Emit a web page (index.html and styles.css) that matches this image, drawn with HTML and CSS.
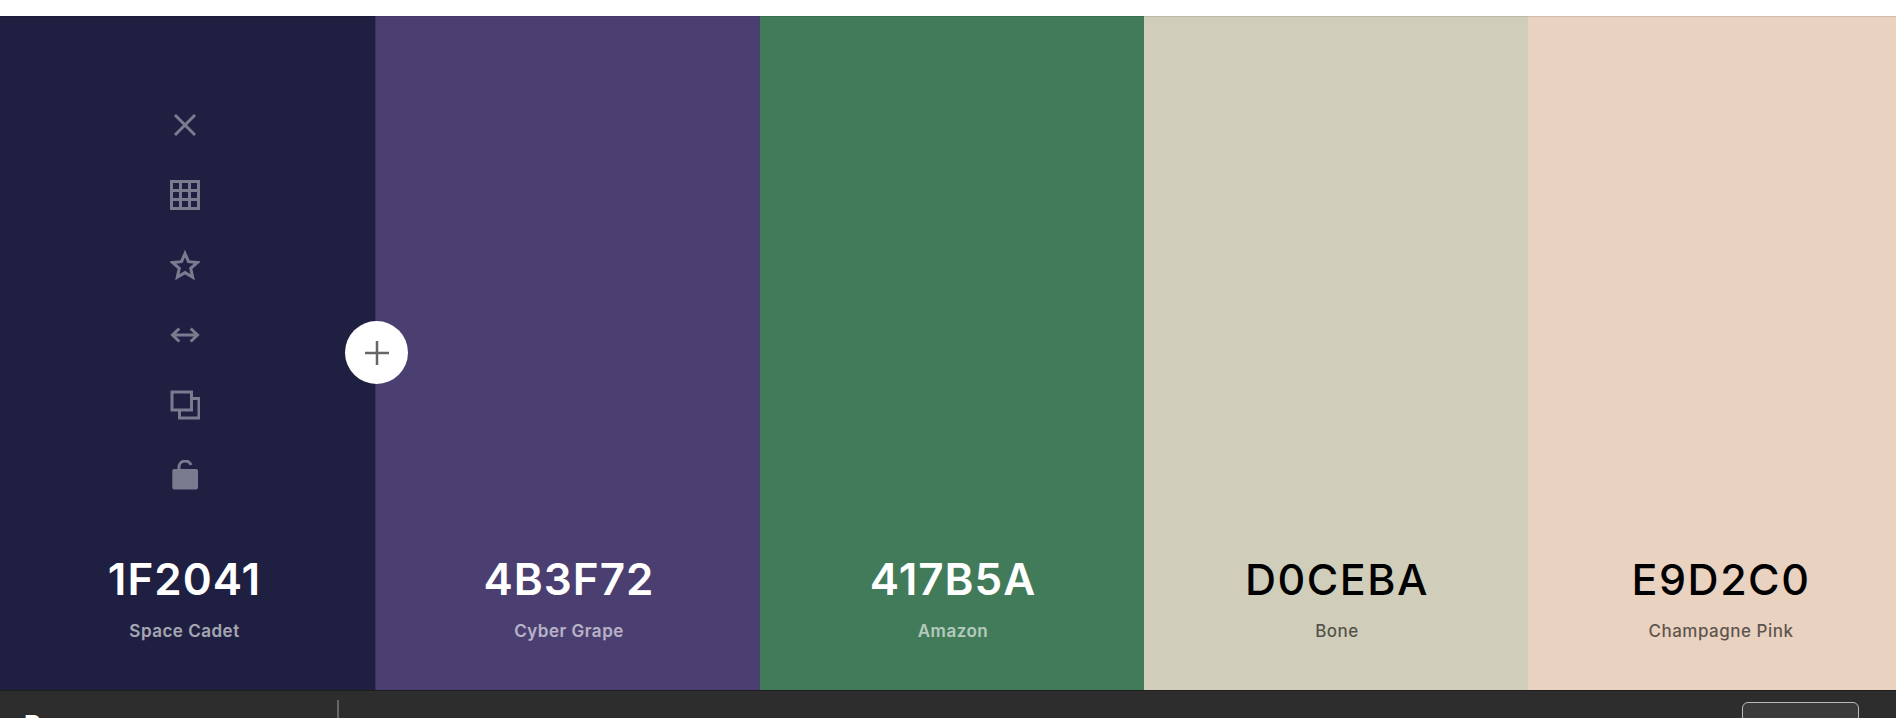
FILE: index.html
```html
<!DOCTYPE html>
<html lang="en">

<head>
    <meta charset="UTF-8">
    <title>Palette</title>
    <link rel="stylesheet" href="styles.css">
</head>

<body>
    <div class="topbar"></div>
    <div class="palette">
        <div class="swatch dark navy">
            <div class="tools">
                <svg class="icon" viewBox="0 0 30 30"><path d="M5 5 25 25M25 5 5 25" /></svg>
                <svg class="icon" viewBox="0 0 30 30"><path d="M1.500 1.500H28.500V28.500H1.500ZM10.500 1.500V28.500M19.500 1.500V28.500M1.500 10.500H28.500M1.500 19.500H28.500" /></svg>
                <svg class="icon" viewBox="0 0 30 30"><path d="M15 3.500 18.500 11.700 27.500 12.500 20.700 18.400 22.700 27.200 15 22.600 7.300 27.200 9.300 18.400 2.500 12.500 11.500 11.700Z" /></svg>
                <svg class="icon" viewBox="0 0 30 30"><path d="M2.500 15H27.500M9.300 8.500 2.500 15 9.300 21.500M20.700 8.500 27.500 15 20.700 21.500" /></svg>
                <svg class="icon" viewBox="0 0 30 30"><path d="M2 2H21.500V20H2ZM9.500 20V28H29V8.500H21.500" /></svg>
                <svg class="icon" viewBox="0 0 30 30"><path class="solid" d="M4.300 9H26A2 2 0 0 1 28 11V27.500A2 2 0 0 1 26 29.500H4.300A2 2 0 0 1 2.300 27.500V11A2 2 0 0 1 4.300 9Z" /><path d="M9 10V7.500A6.200 6.200 0 0 1 21 5" /></svg>
            </div>
            <div class="hex">1F2041</div>
            <div class="name">Space Cadet</div>
            <button class="add"><svg viewBox="0 0 24 24"><path d="M12 0V24M0 12H24" /></svg></button>
        </div>
        <div class="swatch dark grape">
            <div class="hex">4B3F72</div>
            <div class="name">Cyber Grape</div>
        </div>
        <div class="swatch dark amazon">
            <div class="hex">417B5A</div>
            <div class="name">Amazon</div>
        </div>
        <div class="swatch bone">
            <div class="hex">D0CEBA</div>
            <div class="name">Bone</div>
        </div>
        <div class="swatch pink">
            <div class="hex">E9D2C0</div>
            <div class="name">Champagne Pink</div>
        </div>
    </div>
    <div class="footer">
        <div class="logo">P</div>
        <div class="divider"></div>
        <div class="footer-btn"></div>
    </div>
</body>

</html>
```

FILE: styles.css
```css
* {
    padding: 0;
    margin: 0;
    box-sizing: border-box;
}

html,
body {
    height: 718px;
    overflow: hidden;
}

body {
    display: flex;
    flex-direction: column;
    font-family: Inter, "Liberation Sans", sans-serif;
    background-color: #fff;
}

.topbar {
    flex: 0 0 16px;
    background-color: #fff;
}

.palette {
    flex: 0 0 674px;
    width: 1920px;
    margin-left: -8px;
    display: flex;
}

.swatch {
    flex: 0 0 384px;
    position: relative;
    display: flex;
    flex-direction: column;
    align-items: center;
    justify-content: flex-end;
    padding: 0 0 49px 2px;
    border-top: 1px solid rgba(0, 0, 0, 0.1);
    color: #000;
}

.dark {
    color: #fff;
}

.navy {
    background-color: #1f2041;
    border-right: 1px solid #39335e;
}

.grape {
    background-color: #4b3f72;
}

.amazon {
    background-color: #417b5a;
}

.bone {
    background-color: #d0ceba;
}

.pink {
    background-color: #e9d2c0;
}

.tools {
    display: flex;
    flex-direction: column;
    align-items: center;
    gap: 40px;
    margin-bottom: 64px;
}

.icon {
    width: 30px;
    height: 30px;
    display: block;
}

.icon path {
    fill: none;
    stroke: #7b7b90;
    stroke-width: 3;
}

.icon path.solid {
    fill: #7b7b90;
    stroke: none;
}

.hex {
    font-size: 43px;
    font-weight: 500;
    line-height: 50px;
    letter-spacing: 1.5px;
}

.dark .hex {
    font-size: 44px;
    font-weight: 600;
    letter-spacing: 1px;
}

.name {
    margin-top: 17px;
    font-size: 17px;
    font-weight: 500;
    line-height: 20px;
    opacity: 0.6;
    letter-spacing: 0.5px;
}

.dark .name {
    font-weight: 600;
}

.add {
    position: absolute;
    top: 304px;
    right: -33px;
    width: 63px;
    height: 63px;
    border: none;
    border-radius: 50%;
    background-color: #fff;
    display: flex;
    align-items: center;
    justify-content: center;
    z-index: 2;
}

.add svg {
    width: 24px;
    height: 24px;
}

.add path {
    fill: none;
    stroke: #666;
    stroke-width: 2.5;
}

.footer {
    flex: 0 0 28px;
    display: flex;
    align-items: flex-start;
    overflow: hidden;
    background-color: #2d2d2d;
    border-top: 1px solid #1e1e1e;
    color: #fff;
}

.logo {
    flex: 0 0 337px;
    padding: 19px 0 0 24px;
    font-size: 26px;
    font-weight: 700;
    line-height: 30px;
}

.divider {
    width: 2px;
    height: 30px;
    margin-top: 9px;
    background-color: #666;
}

.footer-btn {
    width: 117px;
    height: 40px;
    margin: 11px 37px 0 auto;
    border: 1px solid #bbb;
    border-radius: 6px;
    background-color: #3a3a3a;
}
```
